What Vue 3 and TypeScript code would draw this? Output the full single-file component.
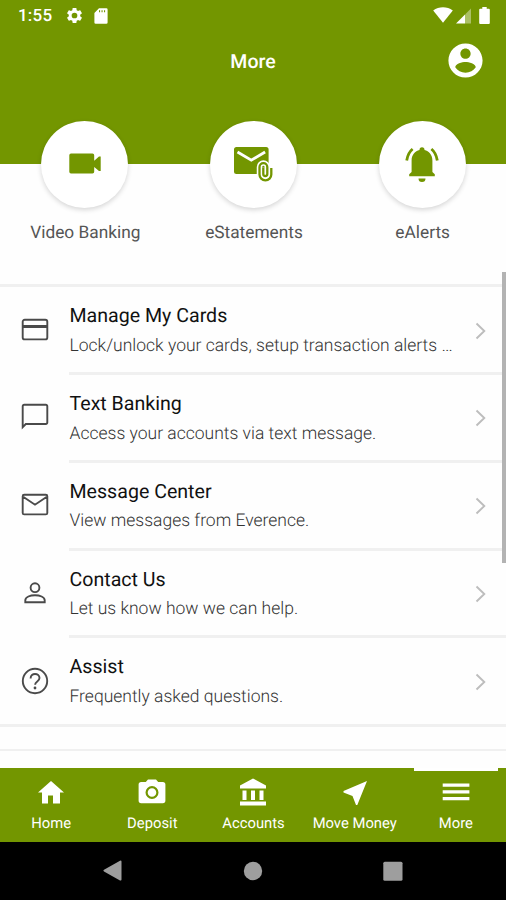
<script setup lang="ts">
interface Shortcut { label: string; icon: 'video' | 'mail' | 'bell'; cls: string }
interface MenuRow { title: string; text: string; icon: string; cls: string }
interface Tab { label: string; path: string; cls: string }

const shortcuts: Shortcut[] = [
  { label: 'Video Banking', icon: 'video', cls: 's-video' },
  { label: 'eStatements', icon: 'mail', cls: 's-mail' },
  { label: 'eAlerts', icon: 'bell', cls: 's-bell' },
]

const clipPath = 'M32.300 25.500v6.500a2 2 0 0 0 4 0v-7a3.900 3.900 0 0 0-7.800 0v7.500a5.900 5.900 0 0 0 11.800 0V26'

const rows: MenuRow[] = [
  { title: 'Manage My Cards', text: 'Lock/unlock your cards, setup transaction alerts …', cls: 'r-cards', icon: 'M5.7 5.8h20.6a2 2 0 0 1 2 2v15.600a2 2 0 0 1-2 2H5.700a2 2 0 0 1-2-2V7.800a2 2 0 0 1 2-2z' },
  { title: 'Text Banking', text: 'Access your accounts via text message.', cls: 'r-text', icon: 'M3.700 26.200V5.200a1.400 1.400 0 0 1 1.400-1.400h21.800a1.400 1.400 0 0 1 1.400 1.400v16.400a1.400 1.400 0 0 1-1.400 1.400H6.800z' },
  { title: 'Message Center', text: 'View messages from Everence.', cls: 'r-message', icon: 'M5.200 5.800h21.600a1.500 1.500 0 0 1 1.500 1.500v16.600a1.500 1.500 0 0 1-1.500 1.500H5.200a1.500 1.500 0 0 1-1.500-1.500V7.300a1.500 1.500 0 0 1 1.500-1.500zM4.500 8L16 15.700 27.500 8' },
  { title: 'Contact Us', text: 'Let us know how we can help.', cls: 'r-contact', icon: 'M16 6.300a4.400 4.400 0 1 1 0 8.800a4.400 4.400 0 0 1 0-8.800zM6.300 25.200v-2c0-3.200 5-5 9.700-5s9.700 1.800 9.700 5v2z' },
  { title: 'Assist', text: 'Frequently asked questions.', cls: 'r-assist', icon: 'M16 3.800a12.200 12.200 0 1 1 0 24.400a12.200 12.200 0 0 1 0-24.400zM11.600 13.400c0-6 8.900-5.500 8.900-.3 0 3.400-4.400 3.300-4.400 6.600' },
]

const tabs: Tab[] = [
  { label: 'Home', cls: 't-home', path: 'M13 26.500v-8h5v8h7v-11h4L16 4 3 15.500h4v11z' },
  { label: 'Deposit', cls: 't-deposit', path: 'M12 2.500L9.800 5H5.200a2.600 2.600 0 0 0-2.600 2.600v16a2.600 2.600 0 0 0 2.600 2.600h21.600a2.600 2.600 0 0 0 2.600-2.600v-16A2.600 2.600 0 0 0 26.800 5h-4.600L20 2.500zM16 9a6.500 6.500 0 1 1 0 13a6.500 6.500 0 0 1 0-13zM16 11.200a4.300 4.300 0 1 0 0 8.600a4.300 4.300 0 0 0 0-8.600z' },
  { label: 'Accounts', cls: 't-accounts', path: 'M16 1.500L3 8.500v3h26v-3zM5.500 13.500h4V23h-4zM14 13.500h4V23h-4zM22.500 13.500h4V23h-4zM3 24.500h26v4H3z' },
  { label: 'Move Money', cls: 't-move', path: 'M28 4L4.500 14.100v1.300l9 3.500L17 28h1.300z' },
  { label: 'More', cls: 't-more', path: 'M2.700 6.500h26.700v3.200H2.700zM2.700 13.300h26.700v3.200H2.700zM2.700 20.100h26.700v3.200H2.700z' },
]
</script>

<template>
  <div class="screen">
    <header class="top">
      <div class="status">
        <span class="time">1:55</span>
        <svg class="gear" viewBox="0 0 24 24"><path d="M19.140 12.940c.04-.3.06-.61.06-.94 0-.32-.02-.64-.07-.94l2.030-1.580c.18-.14.23-.41.12-.61l-1.920-3.320c-.12-.22-.37-.29-.59-.22l-2.390.96c-.5-.38-1.030-.7-1.620-.94l-.36-2.540c-.04-.24-.24-.41-.48-.41h-3.840c-.24 0-.43.17-.47.41l-.36 2.540c-.59.24-1.130.57-1.620.94l-2.390-.96c-.22-.08-.47 0-.59.22L2.740 8.870c-.12.21-.08.47.12.61l2.030 1.580c-.05.3-.09.63-.09.94s.02.64.07.94l-2.030 1.580c-.18.14-.23.41-.12.61l1.920 3.320c.12.22.37.29.59.22l2.390-.96c.5.38 1.030.7 1.620.94l.36 2.540c.05.24.24.41.48.41h3.840c.24 0 .44-.17.47-.41l.36-2.540c.59-.24 1.130-.56 1.620-.94l2.390.96c.22.08.47 0 .59-.22l1.920-3.320c.12-.22.07-.47-.12-.61zM12 15.600a3.600 3.600 0 1 1 0-7.200a3.600 3.600 0 0 1 0 7.200z" /></svg>
        <svg class="sd" viewBox="0 0 14 16"><path fill-rule="evenodd" d="M5 .3h7.300A1.300 1.300 0 0 1 13.600 1.600v12.800a1.300 1.300 0 0 1-1.300 1.300H1.700A1.300 1.300 0 0 1 .4 14.400V4.900zM5 2.300v2h1.100V2.300zM7.500 2.300v2h1.100V2.300zM10 2.300v2h1.100V2.300z" /></svg>
        <span class="grow"></span>
        <svg class="wifi" viewBox="0 0 20 16"><path d="M10 15.800L.2 3.500C6-.8 14-.8 19.800 3.500z" /></svg>
        <svg class="signal" viewBox="0 0 15 16"><path class="faint" d="M15 .5v15H9V6.500z" /><path d="M9 6.500v9H0z" /></svg>
        <svg class="battery" viewBox="0 0 11 17"><path d="M3.300 0h4.400v1.700h2.100a1 1 0 0 1 1 1V16a1 1 0 0 1-1 1H1.200a1 1 0 0 1-1-1V2.700a1 1 0 0 1 1-1h2.100z" /></svg>
      </div>
      <div class="bar">
        <span></span>
        <h1>More</h1>
        <svg class="account" viewBox="0 0 24 24"><path d="M12 2C6.480 2 2 6.480 2 12s4.480 10 10 10 10-4.480 10-10S17.520 2 12 2zm0 3c1.660 0 3 1.340 3 3s-1.340 3-3 3-3-1.340-3-3 1.340-3 3-3zm0 14.200c-2.500 0-4.710-1.280-6-3.220.03-1.990 4-3.080 6-3.080 1.990 0 5.970 1.090 6 3.080-1.290 1.940-3.500 3.220-6 3.220z" /></svg>
      </div>
    </header>

    <section class="shortcuts">
      <div v-for="s in shortcuts" :key="s.label" class="shortcut" :class="s.cls">
        <div class="disc">
          <svg v-if="s.icon === 'video'" viewBox="0 0 44 44"><path d="M8 11.500h21.500a1.700 1.700 0 0 1 1.700 1.700v5.500l4.800-4.100h1.700v14.500H36l-4.800-4v4.700a1.700 1.700 0 0 1-1.700 1.700H8a1.700 1.700 0 0 1-1.700-1.700V13.200A1.700 1.700 0 0 1 8 11.500z" /></svg>
          <svg v-else-if="s.icon === 'mail'" viewBox="0 0 44 44">
            <path d="M5.500 5h29.600a2.500 2.500 0 0 1 2.500 2.500v22a2.500 2.500 0 0 1-2.500 2.500H5.500A2.500 2.500 0 0 1 3 29.500v-22A2.500 2.500 0 0 1 5.500 5z" />
            <path class="flap" d="M6.500 10l13.800 8.200L34.100 10" />
            <path class="halo" :d="clipPath" />
            <path class="clip" :d="clipPath" />
          </svg>
          <svg v-else viewBox="0 0 44 44">
            <path d="M9.200 34.200v-2l2.400-2.300V18.500c0-5.700 3.500-9.300 7.900-10.400v-.4a2.500 2.500 0 0 1 5 0v.4c4.400 1.100 7.900 4.700 7.900 10.400v11.400l2.400 2.300v2zM18.500 36.500h7a3.500 3.500 0 0 1-7 0z" />
            <path class="ring" d="M12.600 7C9.500 9.500 7.500 13.500 6.700 18.500M31.400 7C34.500 9.500 36.500 13.500 37.300 18.500" />
          </svg>
        </div>
        <span class="caption">{{ s.label }}</span>
      </div>
    </section>

    <main class="list">
      <div v-for="r in rows" :key="r.title" class="row" :class="r.cls">
        <svg class="ricon" viewBox="0 0 32 32">
          <path :d="r.icon" />
          <path v-if="r.cls === 'r-cards'" class="stripe" d="M4 12.500h24" />
          <circle v-if="r.cls === 'r-assist'" class="dot" cx="16" cy="23" r="1.400" />
        </svg>
        <div class="body">
          <div class="texts">
            <div class="title">{{ r.title }}</div>
            <div class="sub">{{ r.text }}</div>
          </div>
          <svg class="chev" viewBox="0 0 12 18"><path d="M1.500 1.500L9.300 9 1.500 16.500" /></svg>
        </div>
      </div>
    </main>
    <div class="next-group"></div>
    <div class="scrollbar"></div>

    <nav class="tabs">
      <div v-for="t in tabs" :key="t.label" class="tab" :class="t.cls">
        <svg viewBox="0 0 32 32"><path fill-rule="evenodd" :d="t.path" /></svg>
        <span>{{ t.label }}</span>
      </div>
    </nav>
    <footer class="system">
      <svg class="sys" viewBox="0 0 24 24"><path d="M20.500 2.500v18a1 1 0 0 1-1.500.9L3 12.400a1 1 0 0 1 0-1.700L19 1.700a1 1 0 0 1 1.500.8z" /></svg>
      <svg class="sys" viewBox="0 0 24 24"><circle cx="12" cy="12" r="9.200" /></svg>
      <svg class="sys" viewBox="0 0 24 24"><rect x="2.300" y="2.700" width="19.200" height="19" rx="1.500" /></svg>
    </footer>
  </div>
</template>

<style>
body { margin: 0; background: #fff; }
</style>

<style scoped>
.screen { position: relative; width: 506px; height: 900px; overflow: hidden; display: flex; flex-direction: column; background: #fefefe; font-family: Roboto, "Liberation Sans", sans-serif; text-rendering: geometricPrecision; }
svg { display: block; flex: none; }
.top { height: 164px; flex: none; background: #739600; color: #fff; fill: #fff; }
.status { height: 32px; display: flex; align-items: center; padding: 0 16px 0 18px; box-sizing: border-box; }
.time { font-size: 17px; font-weight: 500; letter-spacing: .2px; width: 46.500px; }
.gear { width: 19px; height: 19px; margin: -1px 0 0 0; }
.sd { width: 14px; height: 16px; margin-left: 10.500px; }
.grow { flex: 1; }
.wifi { width: 20px; height: 16px; margin-top: -2px; }
.signal { width: 15px; height: 16px; margin-left: 3px; }
.faint { opacity: .4; }
.battery { width: 11px; height: 17px; margin: -1px 0 0 8.500px; }
.bar { height: 58px; display: grid; grid-template-columns: 41px 1fr 41px; align-items: center; padding: 0 20px; }
h1 { margin: 2px 0 0; text-align: center; font-size: 19.500px; line-height: 24px; font-weight: 500; }
.account { width: 41px; height: 41px; margin-top: -1px; }
.shortcuts { height: 120px; flex: none; display: grid; grid-template-columns: repeat(3, 1fr); padding-left: 1px; margin-right: -1px; }
.shortcut { display: flex; flex-direction: column; align-items: center; margin-top: -43.500px; }
.disc { width: 87px; height: 87px; margin-right: 1px; border-radius: 50%; background: #fff; box-shadow: 0 2px 5px rgba(0, 0, 0, .16); display: flex; align-items: center; justify-content: center; }
.disc svg { width: 44px; height: 44px; fill: #739600; }
.disc .flap { fill: none; stroke: #fff; stroke-width: 2.800; }
.disc .halo { fill: none; stroke: #fff; stroke-width: 5.500; }
.disc .clip { fill: none; stroke: #739600; stroke-width: 2.300; }
.disc .ring { fill: none; stroke: #739600; stroke-width: 2.800; }
.caption { margin-top: 14px; font-size: 17.300px; line-height: 22px; color: #555; white-space: nowrap; }
.list { flex: none; border-top: 3px solid #f0f0f0; border-bottom: 3px solid #f0f0f0; }
.row { height: 87.850px; box-sizing: border-box; display: flex; align-items: stretch; padding-left: 19px; }
.row:last-child { height: 85.500px; }
.ricon { width: 32px; height: 32px; margin: 26.500px 18px 0 0; fill: none; stroke: #4a4a4a; stroke-width: 1.900; }
.r-cards .stripe { stroke-width: 3; }
.dot { fill: #4a4a4a; stroke: none; }
.body { flex: 1; min-width: 0; display: flex; border-bottom: 3px solid #f0f0f0; }
.row:last-child .body { border-bottom: 0; }
.texts { width: 386px; padding: 17px 0 0 .5px; box-sizing: border-box; }
.title { font-size: 19.600px; line-height: 24px; color: #111; white-space: nowrap; }
.sub { margin-top: 6.700px; font-size: 17.500px; line-height: 22px; font-weight: 300; color: #333; white-space: nowrap; }
.chev { width: 12px; height: 18px; margin: 34.500px 0 0 20px; fill: none; stroke: #bdbdbd; stroke-width: 1.900; }
.next-group { flex: 1; margin-top: 22px; border-top: 2px solid #f0f0f0; }
.scrollbar { position: absolute; right: 0; top: 272px; width: 4px; height: 291px; background: #b3b3b3; }
.tabs { height: 74px; flex: none; display: grid; grid-template-columns: repeat(5, 1fr); background: #739600; color: #fff; }
.tab { position: relative; display: flex; flex-direction: column; align-items: center; padding: 9px 0 0 1px; }
.tab svg { width: 32px; height: 32px; fill: #fff; }
.t-more::before { content: ""; position: absolute; top: 0; left: 9px; width: 84px; height: 2.500px; background: #fff; }
.tab span { margin-top: 4.500px; font-size: 14.800px; line-height: 18px; white-space: nowrap; }
.system { height: 58px; flex: none; background: #000; display: flex; justify-content: center; align-items: center; gap: 116px; fill: #9e9e9e; }
.sys { width: 24px; height: 24px; }
</style>
